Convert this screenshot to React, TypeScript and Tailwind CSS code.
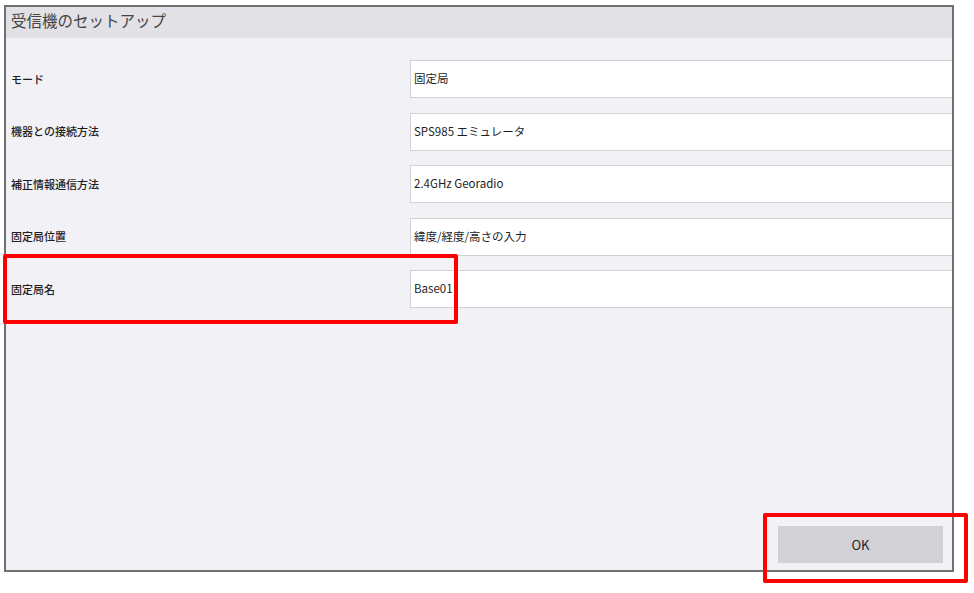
import React from "react";

const rows = [
  { label: "モード", value: "固定局" },
  { label: "機器との接続方法", value: "SPS985 エミュレータ" },
  { label: "補正情報通信方法", value: "2.4GHz Georadio" },
  { label: "固定局位置", value: "緯度/経度/高さの入力" },
  { label: "固定局名", value: "Base01" },
];

export default function App() {
  return (
    <div
      className="relative w-[974px] h-[593px] bg-white overflow-hidden"
      style={{ fontFamily: '"Noto Sans CJK JP", "Noto Sans", sans-serif' }}
    >
      <div className="ml-[4px] mt-[5px] w-[950px] h-[567px] border-2 border-[#707070] bg-[#f2f1f6] flex flex-col">
        <div className="h-[31px] bg-[#e2e1e6] px-[5px] pb-[4px] flex items-center text-[15.5px] text-[#454545] leading-none">
          受信機のセットアップ
        </div>
        <div className="mt-[22px] flex flex-col gap-[14.5px]">
          {rows.map((r) => (
            <div key={r.label} className="flex h-[38px] items-center">
              <div className="w-[404px] pl-[5px] text-[11px] font-medium text-[#1e1e1e]">{r.label}</div>
              <div className="flex-1 h-full bg-white border border-[#d2d2d6] border-r-0 flex items-center pl-[3px] text-[11.5px] text-[#1e1e1e]">
                {r.value}
              </div>
            </div>
          ))}
        </div>
        <div className="flex-1" />
        <div className="flex justify-end pr-[9px] pb-[7px]">
          <div className="w-[165px] h-[37px] bg-[#d1d1d6] flex items-center justify-center text-[13px] text-[#1e1e1e]">
            OK
          </div>
        </div>
      </div>
      <div className="absolute left-[3px] top-[254px] w-[455px] h-[70px] border-4 border-[#ff0000] rounded-[2px]" />
      <div className="absolute left-[763px] top-[513px] w-[205px] h-[70px] border-4 border-[#ff0000] rounded-[2px]" />
    </div>
  );
}
